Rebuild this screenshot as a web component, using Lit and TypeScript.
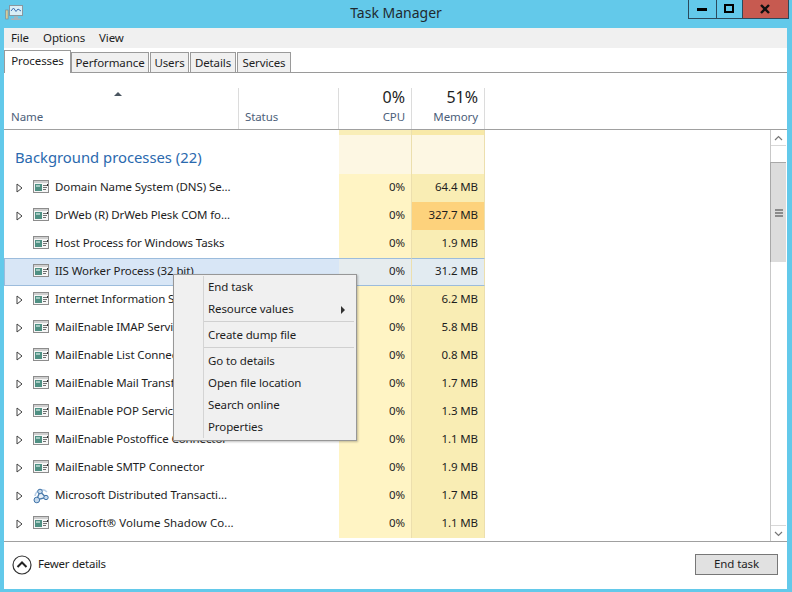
import { LitElement, html, css, svg } from 'lit'
import { customElement } from 'lit/decorators.js'

type Proc = { name: string; mem: string; memBg?: string; arrow?: boolean; icon?: string; sel?: boolean; wide?: boolean }

const procs: Proc[] = [
  { name: 'Domain Name System (DNS) Se...', mem: '64.4 MB', arrow: true },
  { name: 'DrWeb (R) DrWeb Plesk COM fo...', mem: '327.7 MB', memBg: '#fdd27c', arrow: true },
  { name: 'Host Process for Windows Tasks', mem: '1.9 MB' },
  { name: 'IIS Worker Process (32 bit)', mem: '31.2 MB', memBg: '#e2ebf1', sel: true },
  { name: 'Internet Information Services', mem: '6.2 MB', arrow: true },
  { name: 'MailEnable IMAP Service', mem: '5.8 MB', arrow: true },
  { name: 'MailEnable List Connector', mem: '0.8 MB', arrow: true },
  { name: 'MailEnable Mail Transfer Agent', mem: '1.7 MB', arrow: true },
  { name: 'MailEnable POP Service', mem: '1.3 MB', arrow: true },
  { name: 'MailEnable Postoffice Connector', mem: '1.1 MB', arrow: true },
  { name: 'MailEnable SMTP Connector', mem: '1.9 MB', arrow: true },
  { name: 'Microsoft Distributed Transacti...', mem: '1.7 MB', arrow: true, icon: 'net' },
  { name: 'Microsoft\u00ae Volume Shadow Co...', mem: '1.1 MB', arrow: true, wide: true },
]

const appIcon = svg`
  <rect x="0.5" y="0.5" width="15" height="12" fill="#f6f6f6" stroke="#8c8c8c"/>
  <rect x="1" y="1" width="14" height="2" fill="#cfcfcf"/>
  <rect x="2" y="4" width="7" height="7" fill="#4f9083"/>
  <rect x="3" y="5" width="4" height="2" fill="#a4c9c1"/>
  <path d="M10 5.5h4M10 7.5h4M10 9.5h3" stroke="#707070"/>
  <path d="M14.5 4v2" stroke="#303030"/>`

const netIcon = svg`
  <path d="M2 8A7 7 0 0 1 14 4" fill="none" stroke="#b9cfe6" stroke-width="1.5"/>
  <path d="M7 3.5L3.5 12L13 9.5Z" fill="#e8f0f8" stroke="#4d7cab" stroke-width="1.3"/>
  <circle cx="7" cy="3.5" r="2.3" fill="#c5d9ec" stroke="#3f73a8"/>
  <circle cx="3.8" cy="12" r="2.8" fill="#c5d9ec" stroke="#3f73a8"/>
  <circle cx="13" cy="9.5" r="2.2" fill="#c5d9ec" stroke="#3f73a8"/>`

@customElement('app-root')
export class AppRoot extends LitElement {
  static styles = css`
    :host {
      display: block;
      position: relative;
      width: 792px;
      height: 592px;
      overflow: hidden;
      background: #63c9ea;
      font-family: "Noto Sans", "Open Sans", sans-serif;
      font-size: 11.5px;
      letter-spacing: -0.1px;
      color: #1e1e1e;
    }
    .titlebar {
      height: 28px;
      display: grid;
      grid-template-columns: 1fr auto 1fr;
    }
    .app-icon { margin: 4px 0 0 5px; }
    .title { font-size: 14px; letter-spacing: 0; line-height: 26px; color: #1f2a30; }
    .controls { display: flex; justify-content: flex-end; height: 19px; padding-right: 3px; }
    .ctl {
      box-sizing: border-box;
      height: 19px;
      border: 1px solid #2b4a5c;
      border-top: none;
      margin-left: -1px;
      display: flex;
      align-items: center;
      justify-content: center;
    }
    .ctl.min { width: 29px; }
    .ctl.max { width: 27px; }
    .ctl.close { width: 47px; background: #c75a50; }
    .window {
      margin: 0 5px 0 4px;
      height: 561px;
      background: #fff;
      display: flex;
      flex-direction: column;
    }
    .menubar {
      height: 20px;
      flex: none;
      background: #f0f0f0;
      display: flex;
      gap: 14px;
      padding-left: 7px;
      line-height: 19px;
    }
    .tabs {
      height: 25px;
      flex: none;
      box-sizing: border-box;
      border-bottom: 1px solid #9a9a9a;
      display: flex;
      align-items: flex-end;
      gap: 1px;
    }
    .tab {
      box-sizing: border-box;
      height: 20px;
      border: 1px solid #9a9a9a;
      border-bottom: none;
      background: #f0f0f0;
      line-height: 19px;
      text-align: center;
    }
    .tab.active {
      height: 23px;
      margin-bottom: -1px;
      margin-right: -1px;
      background: #fff;
      line-height: 20px;
    }
    .cols {
      display: grid;
      grid-template-columns: 235px 100px 73px 73px 1fr;
    }
    .head {
      height: 57px;
      flex: none;
      box-sizing: border-box;
      border-bottom: 1px solid #a0a0a0;
    }
    .hcell {
      box-sizing: border-box;
      margin-top: 15px;
      height: 41px;
      border-right: 1px solid #dcdcdc;
      color: #4c607a;
      position: relative;
      display: flex;
      flex-direction: column;
      justify-content: flex-end;
      padding: 0 6px 4px 7px;
      line-height: 17px;
    }
    .hcell.status { padding-left: 6px; }
    .hcell.num { text-align: right; }
    .hcell.end { border: none; }
    .pct { font-size: 16px; letter-spacing: 0; line-height: 22px; color: #1e1e1e; }
    .sort {
      position: absolute;
      left: 110px;
      top: 4px;
      width: 0;
      height: 0;
      border: 4px solid transparent;
      border-top: none;
      border-bottom: 4px solid #4a5560;
    }
    .body { flex: 1; min-height: 0; display: flex; }
    .list { flex: 1; min-width: 0; }
    .strip { height: 5px; }
    .strip div:nth-child(3) { background: #f9eeb8; border-right: 1px solid #ecdfae; }
    .strip div:nth-child(4) { background: #f8e9a8; border-right: 1px solid #ecdfae; }
    .group { height: 39px; }
    .group-name {
      grid-column: 1 / 3;
      font-size: 14.8px;
      letter-spacing: 0;
      line-height: 44px;
      padding-left: 11px;
      color: #2a69ae;
    }
    .group .c { background: #fdf7e3; }
    .row { height: 28px; line-height: 25px; }
    .row .name {
      grid-column: 1 / 3;
      display: flex;
      align-items: center;
      white-space: nowrap;
      overflow: hidden;
    }
    .row .name .label { margin-bottom: 3px; }
    .row .name .label.wide { letter-spacing: 0.07px; }
    .arrow { width: 12px; margin-left: 12px; flex: none; display: flex; }
    .proc-icon { margin: 0 6px 0 5px; flex: none; }
    .c {
      box-sizing: border-box;
      text-align: right;
      padding-right: 6px;
      border-right: 1px solid #ecdfae;
      background: #fff4c4;
    }
    .c.mem { background: #f9edb4; }
    .row.sel .name {
      box-sizing: border-box;
      background: #d8e6f6;
      border: 1px solid #9cbcdc;
      border-right: none;
    }
    .row.sel .arrow { margin-left: 11px; }
    .row.sel .c { background: #e6ecee; border-top: 1px solid #9cbcdc; border-bottom: 1px solid #9cbcdc; line-height: 23px; }
    .scrollbar {
      width: 16px;
      flex: none;
      margin-right: 1px;
      box-sizing: border-box;
      border-left: 1px solid #c8c8c8;
      display: flex;
      flex-direction: column;
    }
    .sb-btn { height: 16px; flex: none; display: flex; align-items: center; justify-content: center; box-sizing: border-box; }
    .sb-btn.up { border-bottom: 1px solid #d8d8d8; }
    .sb-btn.down { border-top: 1px solid #d8d8d8; }
    .sb-gap { height: 16px; flex: none; }
    .sb-thumb {
      height: 100px;
      flex: none;
      background: #dcdcdc;
      box-sizing: border-box;
      border-top: 1px solid #a8a8a8;
      margin-left: -1px;
      border-left: 1px solid #a8a8a8;
      display: flex;
      align-items: center;
      justify-content: center;
    }
    .sb-rest { flex: 1; }
    .footer {
      height: 48px;
      flex: none;
      box-sizing: border-box;
      border-top: 1px solid #a0a0a0;
      display: flex;
      align-items: center;
      padding: 0 9px 2px 8px;
    }
    .less { margin-right: 6px; }
    .fewer { letter-spacing: -0.25px; margin-bottom: 2px; }
    .end-btn {
      margin-left: auto;
      box-sizing: border-box;
      width: 83px;
      height: 21px;
      border: 1px solid #777;
      background: #e1e1e1;
      text-align: center;
      line-height: 18px;
    }
    .ctx {
      position: absolute;
      left: 173px;
      top: 274px;
      width: 184px;
      box-sizing: border-box;
      padding: 1px 2px 2px 0;
      border: 1px solid #979797;
      background: #f0f0f0;
      box-shadow: 1px 1px 2px rgba(0, 0, 0, 0.25);
    }
    .ctx-inner { margin-left: 29px; border-left: 1px solid #d4d4d4; }
    .item { height: 22px; line-height: 22px; padding-left: 4px; position: relative; }
    .sep { height: 1px; background: #d0d0d0; margin: 1px 0 2px; }
    .sub {
      position: absolute;
      right: 9px;
      top: 8px;
      width: 0;
      height: 0;
      border: 4px solid transparent;
      border-right: none;
      border-left: 4px solid #333;
    }
  `

  private expander() {
    return html`<svg width="7" height="10" viewBox="0 0 7 10"><path d="M1 1L6 5L1 9Z" fill="#fff" stroke="#404040"/></svg>`
  }

  private row(p: Proc) {
    return html`
      <div class="cols row ${p.sel ? 'sel' : ''}">
        <div class="name">
          <span class="arrow">${p.arrow ? this.expander() : ''}</span>
          <svg class="proc-icon" width="16" height="16" viewBox="0 0 16 16">${p.icon === 'net' ? netIcon : appIcon}</svg>
          <span class="label ${p.wide ? 'wide' : ''}">${p.name}</span>
        </div>
        <div class="c">0%</div>
        <div class="c mem" style=${p.memBg ? `background:${p.memBg}` : ''}>${p.mem}</div>
      </div>
    `
  }

  render() {
    return html`
      <div class="titlebar">
        <svg class="app-icon" width="18" height="17" viewBox="0 0 18 17">
          <rect x="4.5" y="1.5" width="13" height="10" fill="#d9eef7" stroke="#8a979f"/>
          <path d="M6 7L8.5 4L11 7.5L13 5L16 7" fill="none" stroke="#3f6fb0"/>
          <path d="M9 12.5h4v2h3v1.5H6V14.5h3z" fill="#a9b3b9"/>
          <rect x="0.7" y="6" width="2.4" height="9" fill="#d9cf9c" stroke="#7d8a92" stroke-width="0.7"/>
        </svg>
        <div class="title">Task Manager</div>
        <div class="controls">
          <div class="ctl min"><svg width="11" height="4" viewBox="0 0 11 4"><rect width="10" height="3" y="1"/></svg></div>
          <div class="ctl max"><svg width="11" height="10" viewBox="0 0 11 10"><rect x="1" y="1" width="8" height="7" fill="none" stroke="#000" stroke-width="2"/></svg></div>
          <div class="ctl close"><svg width="11" height="10" viewBox="0 0 11 10"><path d="M1 1L9 9M9 1L1 9" stroke="#111" stroke-width="2.4"/></svg></div>
        </div>
      </div>
      <div class="window">
        <div class="menubar"><span>File</span><span>Options</span><span>View</span></div>
        <div class="tabs">
          <div class="tab active" style="width:67px">Processes</div>
          <div class="tab" style="width:78px">Performance</div>
          <div class="tab" style="width:39px">Users</div>
          <div class="tab" style="width:46px">Details</div>
          <div class="tab" style="width:54px">Services</div>
        </div>
        <div class="cols head">
          <div class="hcell"><span class="sort"></span>Name</div>
          <div class="hcell status">Status</div>
          <div class="hcell num"><span class="pct">0%</span>CPU</div>
          <div class="hcell num"><span class="pct">51%</span>Memory</div>
          <div class="hcell end"></div>
        </div>
        <div class="body">
          <div class="list">
            <div class="cols strip"><div></div><div></div><div></div><div></div></div>
            <div class="cols group">
              <div class="group-name">Background processes (22)</div>
              <div class="c"></div>
              <div class="c"></div>
            </div>
            ${procs.map((p) => this.row(p))}
          </div>
          <div class="scrollbar">
            <div class="sb-btn up"><svg width="9" height="6" viewBox="0 0 9 6"><path d="M1 5L4.5 1.5L8 5" fill="none" stroke="#777" stroke-width="1.2"/></svg></div>
            <div class="sb-gap"></div>
            <div class="sb-thumb"><svg width="8" height="8" viewBox="0 0 8 8"><path d="M0 1h8M0 4h8M0 7h8" stroke="#707070" stroke-width="1.4"/></svg></div>
            <div class="sb-rest"></div>
            <div class="sb-btn down"><svg width="9" height="6" viewBox="0 0 9 6"><path d="M1 1L4.5 4.5L8 1" fill="none" stroke="#777" stroke-width="1.2"/></svg></div>
          </div>
        </div>
        <div class="footer">
          <svg class="less" width="20" height="20" viewBox="0 0 20 20">
            <circle cx="10" cy="10" r="9" fill="#fff" stroke="#333" stroke-width="1.2"/>
            <path d="M5.5 12L10 7.5L14.5 12" fill="none" stroke="#222" stroke-width="2"/>
          </svg>
          <span class="fewer">Fewer details</span>
          <div class="end-btn">End task</div>
        </div>
      </div>
      <div class="ctx">
        <div class="ctx-inner">
          <div class="item">End task</div>
          <div class="item">Resource values<span class="sub"></span></div>
          <div class="sep"></div>
          <div class="item">Create dump file</div>
          <div class="sep"></div>
          <div class="item">Go to details</div>
          <div class="item">Open file location</div>
          <div class="item">Search online</div>
          <div class="item">Properties</div>
        </div>
      </div>
    `
  }
}
